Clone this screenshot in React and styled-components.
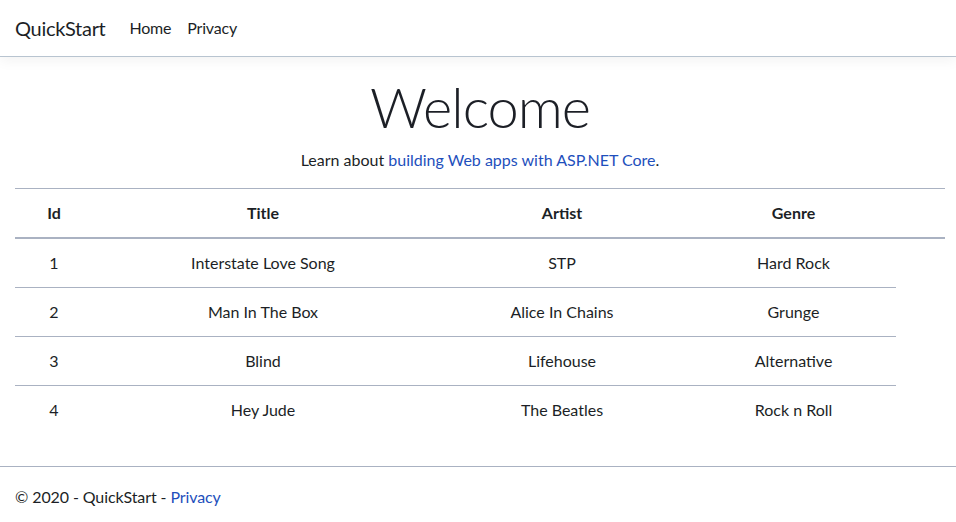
import React from 'react';
import styled, { createGlobalStyle } from 'styled-components';

const GlobalStyle = createGlobalStyle`
  html, body {
    margin: 0;
    padding: 0;
    background: #fff;
  }
  body {
    font-family: Lato, "Liberation Sans", sans-serif;
    font-size: 16px;
    line-height: 1.5;
    color: #1c1f26;
  }
  * { box-sizing: border-box; }
`;

const Navbar = styled.header`
  display: flex;
  align-items: center;
  height: 57px;
  padding: 8px 15px;
  margin-bottom: 16px;
  border-bottom: 1px solid #b8c4d0;
  box-shadow: 0 4px 12px rgba(0, 0, 0, 0.05);
`;

const Brand = styled.a`
  font-size: 20px;
  line-height: 30px;
  letter-spacing: -0.3px;
  color: inherit;
  text-decoration: none;
  margin-right: 16px;
`;

const NavList = styled.nav`
  display: flex;
`;

const NavLink = styled.a`
  padding: 8px;
  letter-spacing: -0.2px;
  color: inherit;
  text-decoration: none;
`;

const Main = styled.main`
  padding: 0 11px 16px 15px;
`;

const Hero = styled.div`
  text-align: center;
`;

const Title = styled.h1`
  margin: 0 0 8px;
  font-size: 56px;
  font-weight: 300;
  line-height: 1.2;
  letter-spacing: -1px;
`;

const Lead = styled.p`
  margin: 0 0 16px;
`;

const Link = styled.a`
  color: #1e4fbc;
  text-decoration: none;
`;

const Table = styled.table`
  width: 100%;
  border-collapse: collapse;
  margin-bottom: 16px;
`;

const Th = styled.th`
  width: ${p => p.w}px;
  padding: 12px;
  text-align: center;
  font-weight: 700;
  border-top: 1px solid #aab2c2;
  border-bottom: 2px solid #aab2c2;
`;

const Td = styled.td`
  padding: 12px;
  text-align: center;
  border-top: 1px solid #aab2c2;
`;

const Footer = styled.footer`
  border-top: 1px solid #aab2c2;
  padding: 0 15px;
  line-height: 60px;
  letter-spacing: -0.1px;
  white-space: nowrap;
`;

const columns = [
  { label: 'Id', w: 78 },
  { label: 'Title', w: 340 },
  { label: 'Artist', w: 258 },
  { label: 'Genre', w: 205 },
  { label: '', w: 49 },
];

const songs = [
  { id: 1, title: 'Interstate Love Song', artist: 'STP', genre: 'Hard Rock' },
  { id: 2, title: 'Man In The Box', artist: 'Alice In Chains', genre: 'Grunge' },
  { id: 3, title: 'Blind', artist: 'Lifehouse', genre: 'Alternative' },
  { id: 4, title: 'Hey Jude', artist: 'The Beatles', genre: 'Rock n Roll' },
];

export default function App() {
  return (
    <>
      <GlobalStyle />
      <Navbar>
        <Brand href="#">QuickStart</Brand>
        <NavList>
          <NavLink href="#">Home</NavLink>
          <NavLink href="#">Privacy</NavLink>
        </NavList>
      </Navbar>
      <Main>
        <Hero>
          <Title>Welcome</Title>
          <Lead>
            Learn about <Link href="#">building Web apps with ASP.NET Core</Link>.
          </Lead>
        </Hero>
        <Table>
          <thead>
            <tr>
              {columns.map(c => (
                <Th key={c.w} w={c.w}>{c.label}</Th>
              ))}
            </tr>
          </thead>
          <tbody>
            {songs.map(s => (
              <tr key={s.id}>
                <Td>{s.id}</Td>
                <Td>{s.title}</Td>
                <Td>{s.artist}</Td>
                <Td>{s.genre}</Td>
              </tr>
            ))}
          </tbody>
        </Table>
      </Main>
      <Footer>
        © 2020 - QuickStart - <Link href="#">Privacy</Link>
      </Footer>
    </>
  );
}
